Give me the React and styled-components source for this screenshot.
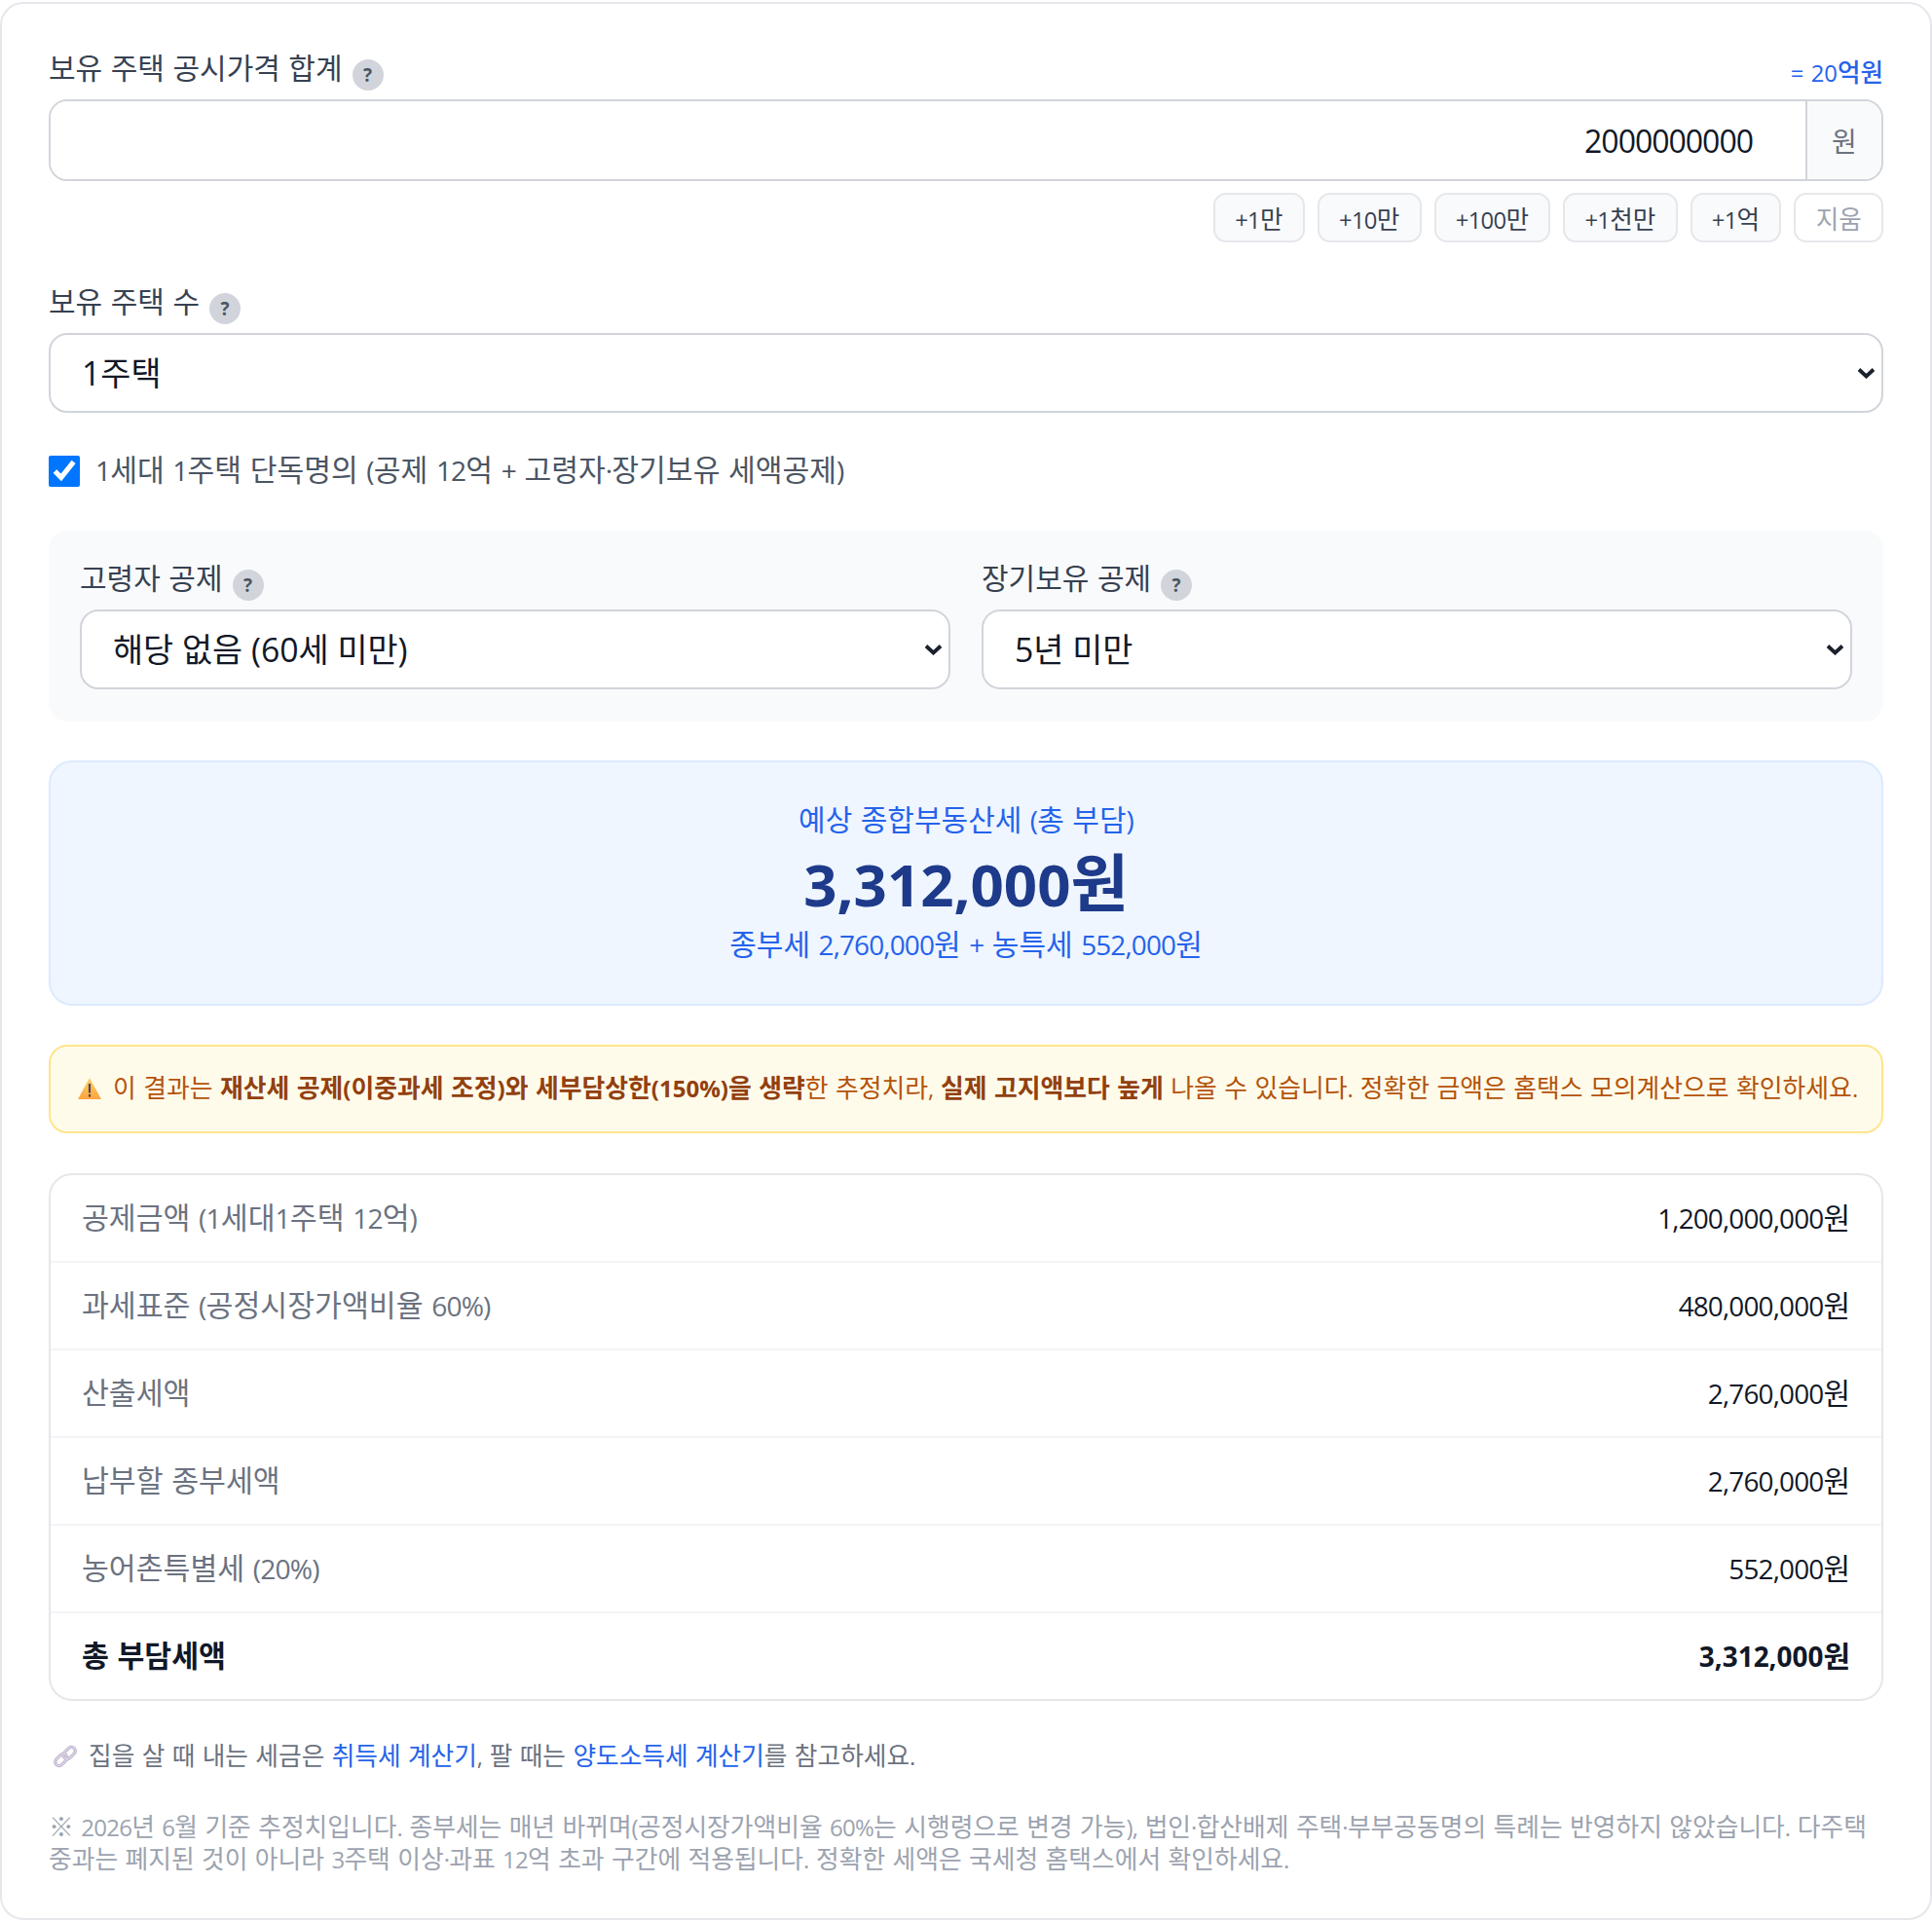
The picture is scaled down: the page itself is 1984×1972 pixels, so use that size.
import React from 'react'
import styled, { createGlobalStyle } from 'styled-components'

const GlobalStyle = createGlobalStyle`
  * { box-sizing: border-box; }
  html, body { margin: 0; padding: 0; background: #fff; }
  body {
    font-family: "Open Sans", "Noto Sans CJK KR", sans-serif;
    word-spacing: 0.045em;
    color: #111827;
  }
`

const chevron = `url("data:image/svg+xml,%3Csvg xmlns='http://www.w3.org/2000/svg' width='19' height='12'%3E%3Cpath d='M2 2.5l7.5 7 7.5-7' fill='none' stroke='%231a202c' stroke-width='3.8'/%3E%3C/svg%3E")`

// 숫자는 한글보다 작고 좁게 보여서 따로 감싼다
const Latin = styled.span`
  font-size: 0.93em;
  letter-spacing: -0.03em;
`

const mix = text =>
  text.split(/([0-9A-Za-z,.%+=()·]+)/).map((part, i) =>
    i % 2 ? <Latin key={i}>{part}</Latin> : part
  )

const Card = styled.div`
  margin-top: 2px;
  height: 1970px;
  background: #fff;
  border: 2px solid #e5e7eb;
  border-radius: 24px;
  padding: 48px;
`

const LabelRow = styled.div`
  display: flex;
  justify-content: space-between;
  align-items: flex-start;
  height: 50px;
`

const Label = styled.span`
  font-size: 30px;
  line-height: 36px;
  color: #374151;
`

const Help = styled.span`
  display: inline-flex;
  align-items: center;
  justify-content: center;
  width: 32px;
  height: 32px;
  margin-left: 10px;
  border-radius: 50%;
  background: #d1d5db;
  color: #4b5563;
  font-size: 19px;
  font-weight: 700;
  vertical-align: -3px;
`

const Converted = styled.span`
  margin-top: 6px;
  font-size: 25.6px;
  line-height: 34px;
  font-weight: 500;
  color: #2563eb;
  ${Latin} { letter-spacing: 0; }
`

const InputGroup = styled.div`
  display: flex;
  height: 84px;
  border: 2px solid #d1d5db;
  border-radius: 19px;
  overflow: hidden;
`

const AmountInput = styled.input`
  flex: 1;
  min-width: 0;
  border: 0;
  outline: 0;
  padding: 0 54px 0 24px;
  text-align: right;
  font: inherit;
  font-size: 32px;
  letter-spacing: -1px;
  color: #111827;
`

const Unit = styled.span`
  display: flex;
  align-items: center;
  justify-content: center;
  width: 78px;
  border-left: 2px solid #d1d5db;
  background: #f9fafb;
  color: #6b7280;
  font-size: 28px;
`

const QuickRow = styled.div`
  display: flex;
  justify-content: flex-end;
  gap: 13px;
  margin-top: 12px;
`

const QuickButton = styled.button`
  height: 51px;
  padding: 0 20.25px;
  border: 2px solid #e5e7eb;
  border-radius: 13px;
  background: ${p => (p.$clear ? '#fff' : '#f9fafb')};
  color: ${p => (p.$clear ? '#9ca3af' : '#374151')};
  font: inherit;
  font-size: 25.6px;
`

const Field = styled.div`
  margin-top: 43px;
`

const Select = styled.select`
  display: block;
  width: 100%;
  height: 82px;
  padding: 0 32px;
  border: 2px solid #d1d5db;
  border-radius: 19px;
  appearance: none;
  background: #fff ${chevron} no-repeat right 6px center;
  color: #111827;
  font: inherit;
  font-size: 33.8px;
  outline: 0;
`

const CheckRow = styled.label`
  display: flex;
  align-items: center;
  gap: 16px;
  margin-top: 44px;
  font-size: 30.2px;
  line-height: 32px;
  color: #4b5563;
`

const Check = styled.input`
  width: 32px;
  height: 32px;
  margin: 0;
`

const CheckText = styled.span`
  line-height: 28px;
  margin-bottom: 2px;
`

const OptionPanel = styled.div`
  display: grid;
  grid-template-columns: 1fr 1fr;
  gap: 32px;
  margin-top: 45px;
  padding: 31px 32px 33px;
  background: #f9fafb;
  border-radius: 19px;
`

const ResultBox = styled.div`
  display: flex;
  flex-direction: column;
  align-items: center;
  margin-top: 40px;
  height: 252px;
  padding-top: 39px;
  background: #eff6ff;
  border: 2px solid #dbeafe;
  border-radius: 24px;
`

const ResultLabel = styled.div`
  font-size: 30px;
  line-height: 40px;
  color: #2563eb;
`

const ResultValue = styled.div`
  margin-top: 3px;
  font-size: 64.5px;
  line-height: 83px;
  font-weight: 700;
  color: #1e3a8a;
  ${Latin} { letter-spacing: 0; }
`

const ResultSub = styled.div`
  font-size: 30px;
  line-height: 40px;
  color: #2563eb;
`

const Warning = styled.div`
  display: flex;
  align-items: center;
  margin-top: 40px;
  height: 91px;
  padding: 0 0 5px 28px;
  background: #fffbeb;
  border: 2px solid #fde68a;
  border-radius: 19px;
  font-size: 25.85px;
  color: #b45309;
  white-space: nowrap;
  strong { color: #92400e; font-weight: 700; }
  strong ${Latin} { letter-spacing: 0; }
`

const WarnIcon = styled.svg`
  flex: none;
  width: 24px;
  height: 22px;
  margin-right: 12px;
  margin-top: 4px;
`

const DetailTable = styled.div`
  margin-top: 41px;
  border: 2px solid #e5e7eb;
  border-radius: 24px;
  overflow: hidden;
`

const DetailRow = styled.div`
  display: flex;
  justify-content: space-between;
  align-items: center;
  height: 90px;
  padding: 0 32px 5px;
  font-size: 30px;
  border-bottom: 2px solid #f3f4f6;
  &:last-child {
    height: 88px;
    border-bottom: 0;
  }
`

const DetailKey = styled.span`
  font-size: 30.3px;
  color: ${p => (p.$total ? '#111827' : '#6b7280')};
  font-weight: ${p => (p.$total ? 700 : 400)};
`

const DetailValue = styled.span`
  color: #111827;
  font-weight: ${p => (p.$total ? 700 : 400)};
  ${Latin} { letter-spacing: ${p => (p.$total ? '0' : '-0.03em')}; }
`

const LinkNote = styled.div`
  display: flex;
  align-items: center;
  margin-top: 39px;
  font-size: 25.7px;
  line-height: 36px;
  color: #6b7280;
  a { color: #2563eb; text-decoration: none; }
`

const LinkIcon = styled.svg`
  flex: none;
  width: 24px;
  height: 24px;
  margin-left: 5px;
  margin-right: 12px;
`

const Footnote = styled.p`
  margin: 38px 0 0;
  font-size: 25.78px;
  line-height: 32px;
  color: #9ca3af;
`

const details = [
  ['공제금액 (1세대1주택 12억)', '1,200,000,000원'],
  ['과세표준 (공정시장가액비율 60%)', '480,000,000원'],
  ['산출세액', '2,760,000원'],
  ['납부할 종부세액', '2,760,000원'],
  ['농어촌특별세 (20%)', '552,000원'],
]

const quick = ['+1만', '+10만', '+100만', '+1천만', '+1억']

const noop = () => {}

export default function App() {
  return (
    <>
      <GlobalStyle />
      <Card>
        <LabelRow>
          <Label>보유 주택 공시가격 합계<Help>?</Help></Label>
          <Converted>{mix('= 20억원')}</Converted>
        </LabelRow>
        <InputGroup>
          <AmountInput value="2000000000" onChange={noop} />
          <Unit>원</Unit>
        </InputGroup>
        <QuickRow>
          {quick.map(q => <QuickButton key={q}>{mix(q)}</QuickButton>)}
          <QuickButton $clear>지움</QuickButton>
        </QuickRow>
        <Field>
          <LabelRow>
            <Label>보유 주택 수<Help>?</Help></Label>
          </LabelRow>
          <Select defaultValue="1">
            <option value="1">1주택</option>
          </Select>
        </Field>
        <CheckRow>
          <Check type="checkbox" checked onChange={noop} />
          <CheckText>{mix('1세대 1주택 단독명의 (공제 12억 + 고령자·장기보유 세액공제)')}</CheckText>
        </CheckRow>
        <OptionPanel>
          <div>
            <LabelRow>
              <Label>고령자 공제<Help>?</Help></Label>
            </LabelRow>
            <Select defaultValue="0">
              <option value="0">해당 없음 (60세 미만)</option>
            </Select>
          </div>
          <div>
            <LabelRow>
              <Label>장기보유 공제<Help>?</Help></Label>
            </LabelRow>
            <Select defaultValue="0">
              <option value="0">5년 미만</option>
            </Select>
          </div>
        </OptionPanel>
        <ResultBox>
          <ResultLabel>{mix('예상 종합부동산세 (총 부담)')}</ResultLabel>
          <ResultValue>{mix('3,312,000원')}</ResultValue>
          <ResultSub>{mix('종부세 2,760,000원 + 농특세 552,000원')}</ResultSub>
        </ResultBox>
        <Warning>
          <WarnIcon viewBox="0 0 24 22">
            <defs>
              <linearGradient id="warn" x1="0" y1="0" x2="0" y2="1">
                <stop offset="0" stopColor="#ffd36e" />
                <stop offset="1" stopColor="#fda33c" />
              </linearGradient>
            </defs>
            <path d="M12 0 24 22H0z" fill="url(#warn)" />
            <rect x="10.9" y="6" width="2.2" height="9.5" fill="#4a4a55" />
            <rect x="10.9" y="17" width="2.2" height="2.6" fill="#4a4a55" />
          </WarnIcon>
          <span>
            {mix('이 결과는 ')}
            <strong>{mix('재산세 공제(이중과세 조정)와 세부담상한(150%)을 생략')}</strong>
            {mix('한 추정치라, ')}
            <strong>실제 고지액보다 높게</strong>
            {mix(' 나올 수 있습니다. 정확한 금액은 홈택스 모의계산으로 확인하세요.')}
          </span>
        </Warning>
        <DetailTable>
          {details.map(([k, v]) => (
            <DetailRow key={k}>
              <DetailKey>{mix(k)}</DetailKey>
              <DetailValue>{mix(v)}</DetailValue>
            </DetailRow>
          ))}
          <DetailRow>
            <DetailKey $total>총 부담세액</DetailKey>
            <DetailValue $total>{mix('3,312,000원')}</DetailValue>
          </DetailRow>
        </DetailTable>
        <LinkNote>
          <LinkIcon viewBox="0 0 24 24" fill="none">
            <g stroke="#bfb4cf" strokeWidth="3.2">
              <rect x="0.8" y="11.5" width="14" height="8" rx="4" transform="rotate(-45 7.8 15.5)" />
              <rect x="9.2" y="4.5" width="14" height="8" rx="4" transform="rotate(-45 16.2 8.5)" />
            </g>
            <g stroke="#e4dfec" strokeWidth="1">
              <rect x="0.8" y="11.5" width="14" height="8" rx="4" transform="rotate(-45 7.8 15.5)" />
              <rect x="9.2" y="4.5" width="14" height="8" rx="4" transform="rotate(-45 16.2 8.5)" />
            </g>
          </LinkIcon>
          <span>
            {mix('집을 살 때 내는 세금은 ')}
            <a href="#a">취득세 계산기</a>
            {mix(', 팔 때는 ')}
            <a href="#b">양도소득세 계산기</a>
            {mix('를 참고하세요.')}
          </span>
        </LinkNote>
        <Footnote>
          {mix('※ 2026년 6월 기준 추정치입니다. 종부세는 매년 바뀌며(공정시장가액비율 60%는 시행령으로 변경 가능), 법인·합산배제 주택·부부공동명의 특례는 반영하지 않았습니다. 다주택 중과는 폐지된 것이 아니라 3주택 이상·과표 12억 초과 구간에 적용됩니다. 정확한 세액은 국세청 홈택스에서 확인하세요.')}
        </Footnote>
      </Card>
    </>
  )
}
